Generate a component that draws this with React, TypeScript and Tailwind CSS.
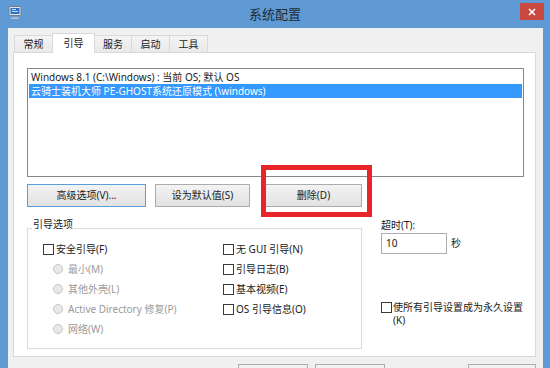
import React from 'react';

const tabs = [
  { label: '常规', w: 'w-[39px]' },
  { label: '引导', w: 'w-[43px]', active: true },
  { label: '服务', w: 'w-[38px]' },
  { label: '启动', w: 'w-[39px]' },
  { label: '工具', w: 'w-[39px]' },
];

function Box() {
  return <span className="block w-[11px] h-[11px] border border-[#3a3a3a] bg-white shrink-0" />;
}

function Check({ label }: { label: string }) {
  return (
    <div className="flex items-center gap-[2px] h-[20px] text-[#1a1a1a]">
      <Box />
      <span className="leading-[14px]">{label}</span>
    </div>
  );
}

function Radio({ label }: { label: string }) {
  return (
    <div className="flex items-center gap-[5px] h-[20px] pl-[10px] text-[#9a9a9a]">
      <span className="w-[10px] h-[10px] rounded-full border border-[#c4c4c4] bg-[#e9e9e9] shrink-0" />
      <span className="leading-[14px]">{label}</span>
    </div>
  );
}

function Btn({ children, w, primary }: { children?: React.ReactNode; w: string; primary?: boolean }) {
  return (
    <div
      className={`${w} h-[23px] flex items-center justify-center border bg-linear-to-b from-[#f3f3f3] to-[#e2e2e2] text-[#1a1a1a] shrink-0 ${
        primary ? 'border-[#5a9fd8] from-[#eaf1f7] to-[#dce6ef]' : 'border-[#acacac]'
      }`}
    >
      {children}
    </div>
  );
}

function AppIcon() {
  return (
    <svg width="15" height="14" viewBox="0 0 15 14">
      <rect x="1" y="0.5" width="12" height="9" rx="1" fill="#dfe6ee" stroke="#6d7f93" />
      <rect x="2.5" y="2" width="9" height="6" fill="#2f6fc4" />
      <path d="M4 3.5 L8 3.5 M4 5.5 L10 5.5" stroke="#bfe0ff" strokeWidth="1" />
      <rect x="5" y="10" width="4" height="1.5" fill="#8b98a6" />
      <rect x="3" y="11.5" width="8" height="1.5" rx="0.5" fill="#b9c3cd" />
    </svg>
  );
}

export default function App() {
  return (
    <div className="relative w-[550px] h-[368px] overflow-hidden bg-[#5f9ad5] flex flex-col font-['Noto_Sans','Noto_Sans_CJK_SC',sans-serif] text-[10px]">
      {/* title bar */}
      <div className="h-[28px] shrink-0 grid grid-cols-[1fr_auto_1fr] items-start">
        <div className="pl-[8px] pt-[6px]">
          <AppIcon />
        </div>
        <div className="text-[13px] leading-[28px] text-[#1e2a36]">系统配置</div>
        <div className="flex justify-end pr-[6px] pt-[3px]">
          <div className="w-[24px] h-[17px] bg-[#c9483f] flex items-center justify-center">
            <svg width="8" height="8" viewBox="0 0 8 8">
              <path d="M1 1 L7 7 M7 1 L1 7" stroke="#fff" strokeWidth="1.6" />
            </svg>
          </div>
        </div>
      </div>

      {/* client */}
      <div className="flex-1 flex">
        <div className="w-[8px] shrink-0" />
        <div className="w-[535px] bg-[#f0f0f0] flex flex-col pl-[5px] pr-[7px] pt-[5px]">
          {/* tabs */}
          <div className="flex items-end h-[20px] pl-[1px]">
            {tabs.map((t, i) => (
              <div
                key={t.label}
                className={`${t.w} ${i > 0 ? '-ml-px' : ''} border border-b-0 border-[#d9d9d9] flex items-center justify-center text-[#1a1a1a] ${
                  t.active ? 'h-[20px] bg-white relative z-10' : 'h-[18px] bg-linear-to-b from-[#f3f3f3] to-[#e9e9e9]'
                }`}
              >
                {t.label}
              </div>
            ))}
          </div>

          {/* panel */}
          <div className="-mt-px h-[305px] border border-[#d9d9d9] bg-white pl-[13px] pt-[15px] flex flex-col">
            <div className="w-[497px] h-[109px] border border-[#828790] p-px">
              <div className="h-[14px] leading-[14px] pl-[2px] text-[#1a1a1a]">Windows 8.1 (C:\Windows) : 当前 OS; 默认 OS</div>
              <div className="h-[14px] leading-[14px] pl-[2px] bg-[#3399ff] text-white">
                云骑士装机大师 PE-GHOST系统还原模式 (\windows)
              </div>
            </div>

            <div className="mt-[7px] flex">
              <Btn w="w-[119px]" primary>
                高级选项(V)...
              </Btn>
              <div className="ml-[9px]">
                <Btn w="w-[95px]">设为默认值(S)</Btn>
              </div>
              <div className="ml-[15px]">
                <Btn w="w-[97px]">删除(D)</Btn>
              </div>
            </div>

            <div className="mt-[11px] flex">
              <fieldset className="w-[335px] h-[131px] border border-[#dcdcdc] pl-[15px]">
                <legend className="ml-[-11px] px-[1px] leading-[12px] pb-[9px] text-[#1a1a1a]">引导选项</legend>
                <div className="grid grid-cols-[180px_1fr]">
                  <div className="flex flex-col">
                    <Check label="安全引导(F)" />
                    <Radio label="最小(M)" />
                    <Radio label="其他外壳(L)" />
                    <Radio label="Active Directory 修复(P)" />
                    <Radio label="网络(W)" />
                  </div>
                  <div className="flex flex-col">
                    <Check label="无 GUI 引导(N)" />
                    <Check label="引导日志(B)" />
                    <Check label="基本视频(E)" />
                    <Check label="OS 引导信息(O)" />
                  </div>
                </div>
              </fieldset>

              <div className="ml-[19px] flex flex-col text-[#1a1a1a]">
                <div className="leading-[14px]">超时(T):</div>
                <div className="mt-[1px] flex items-center">
                  <div className="w-[66px] h-[21px] border border-[#abadb3] bg-white pl-[4px] flex items-center">10</div>
                  <span className="ml-[4px]">秒</span>
                </div>
                <div className="mt-[47px] flex items-start">
                  <div className="mt-[1px]">
                    <Box />
                  </div>
                  <span className="ml-[1px] leading-[13px]">
                    使所有引导设置成为永久设置
                    <br />
                    (K)
                  </span>
                </div>
              </div>
            </div>
          </div>

          {/* bottom buttons, cut off */}
          <div className="mt-[7px] flex">
            <div className="ml-[225px]">
              <Btn w="w-[70px]" />
            </div>
            <div className="ml-[7px]">
              <Btn w="w-[70px]" />
            </div>
            <div className="ml-[83px]">
              <Btn w="w-[68px]" />
            </div>
          </div>
        </div>
      </div>

      {/* red annotation */}
      <div className="absolute left-[261px] top-[165px] w-[111px] h-[52px] border-[5px] border-[#e8262a]" />
    </div>
  );
}
